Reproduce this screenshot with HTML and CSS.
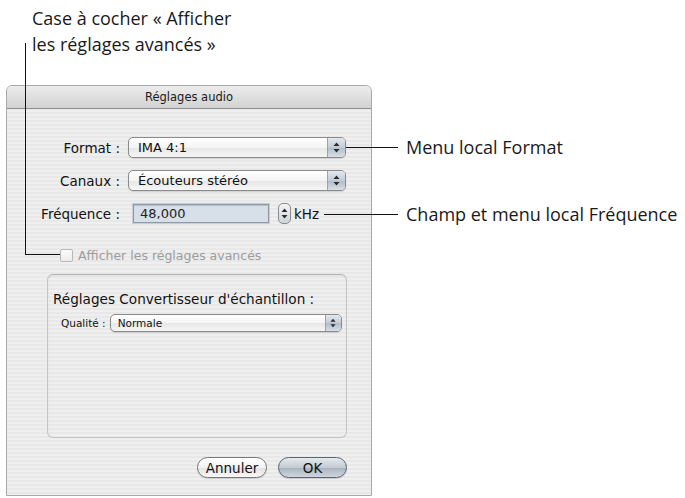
FILE: index.html
```html
<!DOCTYPE html>
<html>
<head>
    <meta charset="UTF-8">
    <title>Réglages audio</title>
    <link rel="stylesheet" href="styles.css">
</head>
<body>
    <div class="page">
        <div class="note-top">Case à cocher « Afficher<br>les réglages avancés »</div>

        <div class="dialog">
            <div class="titlebar">Réglages audio</div>
            <div class="dialog-body">
                <div class="form">
                    <span class="label">Format :</span>
                    <div class="popup">
                        <span class="popup-text">IMA 4:1</span>
                        <span class="popup-arrows"><svg width="7" height="11" viewBox="0 0 7 11"><path d="M3.5 0.5 L6.5 4 L0.5 4 Z M0.5 7 L6.5 7 L3.5 10.5 Z" fill="#2b2b2b"/></svg></span>
                    </div>

                    <span class="label">Canaux :</span>
                    <div class="popup">
                        <span class="popup-text">Écouteurs stéréo</span>
                        <span class="popup-arrows"><svg width="7" height="11" viewBox="0 0 7 11"><path d="M3.5 0.5 L6.5 4 L0.5 4 Z M0.5 7 L6.5 7 L3.5 10.5 Z" fill="#2b2b2b"/></svg></span>
                    </div>

                    <span class="label">Fréquence :</span>
                    <div class="freq">
                        <div class="field">48,000</div>
                        <span class="stepper"><svg width="7" height="11" viewBox="0 0 7 11"><path d="M3.5 0.5 L6.5 4 L0.5 4 Z M0.5 7 L6.5 7 L3.5 10.5 Z" fill="#2b2b2b"/></svg></span>
                        <span class="unit">kHz</span>
                    </div>
                </div>

                <div class="check">
                    <span class="check-box"></span>
                    <span>Afficher les réglages avancés</span>
                </div>

                <div class="group">
                    <div class="group-title">Réglages Convertisseur d'échantillon :</div>
                    <div class="small-row">
                        <span class="small-label">Qualité :</span>
                        <div class="popup popup-small">
                            <span class="popup-text">Normale</span>
                            <span class="popup-arrows"><svg width="6" height="10" viewBox="0 0 7 11"><path d="M3.5 0.5 L6.5 4 L0.5 4 Z M0.5 7 L6.5 7 L3.5 10.5 Z" fill="#2b2b2b"/></svg></span>
                        </div>
                    </div>
                </div>

                <div class="buttons">
                    <button class="btn">Annuler</button>
                    <button class="btn btn-default">OK</button>
                </div>
            </div>
        </div>

        <!-- callouts -->
        <div class="callout-line line-left-v"></div>
        <div class="callout-line line-left-h"></div>
        <div class="callout-line line-format"></div>
        <div class="callout-line line-freq"></div>
        <div class="note note-format">Menu local Format</div>
        <div class="note note-freq">Champ et menu local Fréquence</div>
    </div>
</body>
</html>
```

FILE: styles.css
```css
body {
    margin: 0;
    background: #fff;
    font-family: 'DejaVu Sans', 'Liberation Sans', sans-serif;
}

.page {
    position: relative;
    width: 685px;
    height: 498px;
    overflow: hidden;
}

.note-top,
.note {
    font-family: 'Open Sans', 'Lato', sans-serif;
    font-size: 18px;
    color: #1a1a1a;
}

.note-top {
    padding: 5px 0 0 32px;
    line-height: 26px;
    box-sizing: border-box;
    height: 85px;
}

/* dialog window */
.dialog {
    margin-left: 6px;
    width: 364px;
    height: 409px;
    border: 1px solid #a9a9a9;
    border-radius: 6px 6px 0 0;
    background: repeating-linear-gradient(to bottom, #efefef 0, #efefef 2px, #e8e8e8 2px, #e8e8e8 4px);
    overflow: hidden;
}

.titlebar {
    height: 22px;
    line-height: 22px;
    text-align: center;
    font-size: 11.5px;
    color: #1a1a1a;
    background: linear-gradient(to bottom, #ececec, #d2d2d2);
    border-bottom: 1px solid #8f8f8f;
}

.dialog-body {
    padding-top: 28px;
}

.form {
    display: grid;
    grid-template-columns: 107px 218px;
    column-gap: 8px;
    row-gap: 12px;
    padding-left: 6px;
    align-items: center;
}

.label {
    text-align: right;
    font-size: 13.5px;
    color: #111;
}

.popup {
    height: 19px;
    display: flex;
    align-items: stretch;
    border: 1px solid #8a8a8a;
    border-radius: 5px;
    background: linear-gradient(to bottom, #ffffff 0%, #f4f4f4 50%, #e6e6e6 51%, #f6f6f6 100%);
    box-shadow: 0 1px 1px rgba(0, 0, 0, 0.12);
    overflow: hidden;
}

.popup-text {
    flex: 1;
    padding-left: 9px;
    font-size: 13px;
    line-height: 19px;
    color: #111;
}

.popup-arrows {
    width: 17px;
    display: flex;
    align-items: center;
    justify-content: center;
    border-left: 1px solid #9aa3ae;
    background: linear-gradient(to bottom, #e3e8ee 0%, #c3ccd6 50%, #b1bcc8 51%, #d8dfe7 100%);
}

.freq {
    display: flex;
    align-items: center;
    height: 21px;
}

.field {
    margin-left: 5px;
    width: 128px;
    height: 17px;
    line-height: 17px;
    padding-left: 6px;
    font-size: 13px;
    color: #222;
    background: #d7dfe8;
    border: 1px solid #8f9aa6;
    box-shadow: 0 0 0 1px #c4ceda, inset 0 1px 1px rgba(0, 0, 0, 0.15);
}

.stepper {
    margin-left: 9px;
    width: 11px;
    height: 19px;
    display: flex;
    align-items: center;
    justify-content: center;
    border: 1px solid #8a8a8a;
    border-radius: 5px;
    background: linear-gradient(to bottom, #f4f4f4, #cfd4da);
}

.unit {
    margin-left: 3px;
    font-size: 13.5px;
    color: #111;
}

/* checkbox */
.check {
    display: flex;
    align-items: center;
    gap: 5px;
    margin: 24px 0 0 53px;
    font-size: 12.5px;
    color: #9c9c9c;
}

.check-box {
    width: 11px;
    height: 11px;
    border: 1px solid #b8b8b8;
    border-radius: 2px;
    background: linear-gradient(to bottom, #fbfbfb, #ececec);
}

/* group box */
.group {
    margin: 11px 0 0 40px;
    width: 298px;
    height: 162px;
    border: 1px solid #c4c4c4;
    border-top-color: #b4b4b4;
    border-radius: 6px;
    box-shadow: inset 0 1px 2px rgba(0, 0, 0, 0.06);
}

.group-title {
    margin: 16px 0 0 5px;
    font-size: 13.6px;
    color: #111;
}

.small-row {
    display: flex;
    align-items: center;
    gap: 4px;
    margin: 7px 0 0 13px;
}

.small-label {
    font-size: 10.5px;
    color: #111;
}

.popup-small {
    width: 230px;
    height: 16px;
}

.popup-small .popup-text {
    font-size: 10.5px;
    line-height: 16px;
    padding-left: 7px;
}

.popup-small .popup-arrows {
    width: 15px;
}

/* buttons */
.buttons {
    display: flex;
    justify-content: flex-end;
    gap: 11px;
    margin: 19px 24px 0 0;
}

.btn {
    height: 21px;
    width: 70px;
    padding: 0;
    font-family: 'DejaVu Sans', 'Liberation Sans', sans-serif;
    font-size: 13.5px;
    color: #111;
    border: 1px solid #777;
    border-radius: 11px;
    background: linear-gradient(to bottom, #ffffff 0%, #f2f2f2 50%, #e2e2e2 51%, #f8f8f8 100%);
    box-shadow: 0 1px 1px rgba(0, 0, 0, 0.15);
}

.btn-default {
    width: 69px;
    border-color: #5a6470;
    background: linear-gradient(to bottom, #e6eaef 0%, #c3cad3 50%, #a8b2bf 51%, #cfd6df 100%);
}

/* annotation lines */
.callout-line {
    position: absolute;
    background: #111;
}

.line-left-v {
    left: 25px;
    top: 43px;
    width: 1px;
    height: 212px;
}

.line-left-h {
    left: 25px;
    top: 254px;
    width: 35px;
    height: 1px;
}

.line-format {
    left: 346px;
    top: 147px;
    width: 52px;
    height: 1px;
}

.line-freq {
    left: 324px;
    top: 214px;
    width: 74px;
    height: 1px;
}

.note {
    position: absolute;
    left: 406px;
    line-height: 20px;
}

.note-format {
    top: 137px;
}

.note-freq {
    top: 204px;
}
```
